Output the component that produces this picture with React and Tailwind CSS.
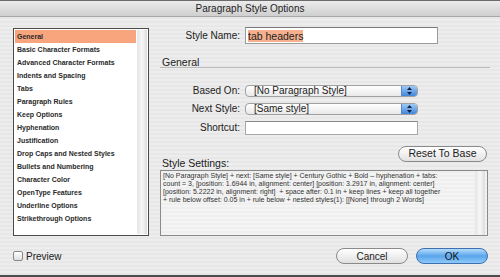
const items = [
  "General",
  "Basic Character Formats",
  "Advanced Character Formats",
  "Indents and Spacing",
  "Tabs",
  "Paragraph Rules",
  "Keep Options",
  "Hyphenation",
  "Justification",
  "Drop Caps and Nested Styles",
  "Bullets and Numbering",
  "Character Color",
  "OpenType Features",
  "Underline Options",
  "Strikethrough Options",
];

// the dialog wraps these lines at fixed points
const settings = [
  "[No Paragraph Style] + next: [Same style] + Century Gothic + Bold – hyphenation + tabs:",
  "count = 3, [position: 1.6944 in, alignment: center] [position: 3.2917 in, alignment: center]",
  "[position: 5.2222 in, alignment: right]  + space after: 0.1 in + keep lines + keep all together",
  "+ rule below offset: 0.05 in + rule below + nested styles(1): [[None] through 2 Words]",
];

function Popup({ value }) {
  return (
    <div className="flex h-[12px] w-[173px] overflow-hidden rounded-[4px] border border-[#a0a0a0] bg-gradient-to-b from-white to-[#e9e9e9]">
      <span className="flex-1 pl-[8px] text-[10px] leading-[10px] text-[#222]">{value}</span>
      <span className="flex w-[16px] items-center justify-center border-l border-[#5a86c4] bg-gradient-to-b from-[#9ccaf6] to-[#3f86dc]">
        <svg width="5" height="8" viewBox="0 0 5 8">
          <polygon points="2.5,0 5,3 0,3" fill="#14213d" />
          <polygon points="0,5 5,5 2.5,8" fill="#14213d" />
        </svg>
      </span>
    </div>
  );
}

function Label({ children }) {
  return <div className="pr-[5px] text-right text-[10px] leading-[12px] text-[#222]">{children}</div>;
}

function Scroll() {
  return <div className="w-[10px] shrink-0 bg-gradient-to-r from-[#e4e4e4] via-[#f7f7f7] to-[#dcdcdc]" />;
}

export default function App() {
  return (
    <div className="flex h-[277px] w-[500px] flex-col overflow-hidden font-['Liberation_Sans',Arial,sans-serif] text-[#222]">
      <div className="flex h-[17px] shrink-0 items-center justify-center border-t border-[#6b6b6b] border-b border-b-[#a8a8a8] bg-gradient-to-b from-[#ececec] to-[#cfcfcf] text-[10px] text-[#1e1e1e]">
        Paragraph Style Options
      </div>

      <div className="flex flex-1 flex-col bg-[repeating-linear-gradient(0deg,#ededed_0px,#ededed_2px,#e7e7e7_2px,#e7e7e7_4px)]">
        <div className="flex">
          <div className="ml-[13px] mt-[11px] flex h-[208px] w-[136px] border border-[#4a4a4a] bg-white p-[1px]">
            <div className="flex-1 pr-[1px]">
              {items.map((it, i) => (
                <div
                  key={it}
                  className={
                    "h-[13px] pl-[2px] text-[7px] font-bold leading-[13px] text-[#2a2a2a] " +
                    (i === 0 ? "bg-[#f8a47c]" : "")
                  }
                >
                  {it}
                </div>
              ))}
            </div>
            <Scroll />
          </div>

          <div className="ml-[11px] flex w-[330px] flex-col">
            <div className="mt-[10px] grid grid-cols-[85px_1fr] items-center">
              <Label>Style Name:</Label>
              <div className="flex h-[17px] w-[193px] items-center border border-[#9a9a9a] border-t-[#7a7a7a] bg-white pl-[2px] text-[10.5px]">
                <span className="bg-[#f7b08e] leading-[12px]">tab headers</span>
              </div>
            </div>

            <div className="mt-[13px] border-b border-[#b9b9b9] pl-[2px] text-[10.5px] leading-[10px]">General</div>

            <div className="mt-[17px] grid grid-cols-[85px_1fr] items-center gap-y-[6px]">
              <Label>Based On:</Label>
              <Popup value="[No Paragraph Style]" />
              <Label>Next Style:</Label>
              <Popup value="[Same style]" />
              <Label>Shortcut:</Label>
              <div className="h-[14px] w-[173px] border border-[#a8a8a8] border-t-[#888] bg-white" />
            </div>

            <div className="mt-[11px] flex h-[24px] items-start justify-between">
              <div className="mt-[11px] pl-[2px] text-[10.5px] leading-[12px]">Style Settings:</div>
              <div className="mr-[3px] flex h-[16px] w-[89px] items-center justify-center rounded-full border border-[#8a8a8a] bg-gradient-to-b from-white to-[#e2e2e2] text-[10.5px]">
                Reset To Base
              </div>
            </div>

            <div className="flex h-[66px] w-[328px] border border-[#8a8a8a] bg-[repeating-linear-gradient(0deg,#f4f4f4_0px,#f4f4f4_2px,#efefef_2px,#efefef_4px)]">
              <div className="flex-1 overflow-hidden pl-[2px] pt-[1px] text-[7px] leading-[8px] text-[#333]">
                {settings.map((l) => (
                  <div key={l} className="whitespace-pre">{l}</div>
                ))}
              </div>
              <Scroll />
              <div className="w-[2px]" />
            </div>
          </div>
        </div>

        <div className="mt-[12px] flex h-[16px] items-center">
          <div className="ml-[13px] h-[10px] w-[10px] rounded-[2px] border border-[#8a8a8a] bg-gradient-to-b from-white to-[#dedede]" />
          <div className="ml-[3px] text-[10px]">Preview</div>
          <div className="ml-auto flex gap-[8px] pr-[12px]">
            <div className="flex h-[16px] w-[72px] items-center justify-center rounded-full border border-[#8a8a8a] bg-gradient-to-b from-white to-[#e0e0e0] text-[10px]">
              Cancel
            </div>
            <div className="flex h-[16px] w-[72px] items-center justify-center rounded-full border border-[#3e6fb3] bg-gradient-to-b from-[#b4dcfb] via-[#5aa5ec] to-[#8ccaf8] text-[10px] text-[#111]">
              OK
            </div>
          </div>
        </div>
        <div className="flex-1" />
        <div className="h-[2px] bg-[#4d4d4d]" />
      </div>
    </div>
  );
}
